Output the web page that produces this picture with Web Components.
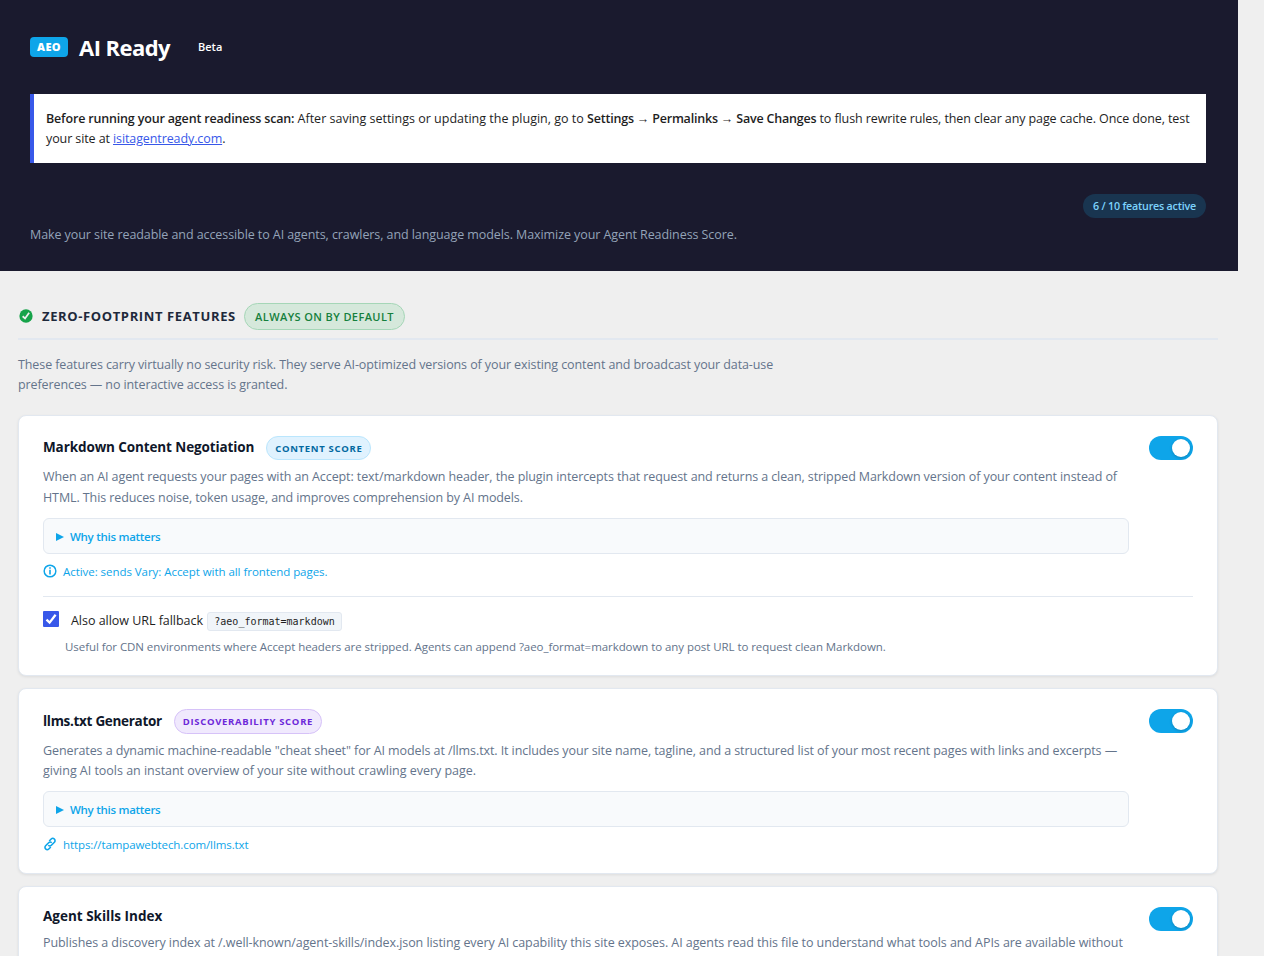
<!DOCTYPE html>
<html lang="en">
<head>
<meta charset="utf-8">
<title>AI Ready</title>
<style>
    body {
        margin: 0;
        background: #efefef;
        font-family: "Open Sans", "Noto Sans", sans-serif;
        font-size: 12.5px;
        color: #1e1e1e;
        height: 956px;
        overflow: hidden;
    }
</style>
</head>
<body>
<aeo-page></aeo-page>

<script>
class AeoBadge extends HTMLElement {
    connectedCallback() {
        this.attachShadow({ mode: 'open' }).innerHTML = `
            <style>
                :host {
                    display: inline-flex;
                    flex: none;
                    align-items: center;
                    justify-content: center;
                    box-sizing: border-box;
                    width: var(--w);
                    height: 24px;
                    border: 1px solid #bae6fd;
                    border-radius: 20px;
                    background: #e0f2fe;
                    color: #0369a1;
                    font-size: 9.5px;
                    font-weight: 700;
                    letter-spacing: var(--ls, .7px);
                    white-space: nowrap;
                }
                :host([kind="discover"]) {
                    height: 25px;
                    background: #f0e9fd;
                    border-color: #d6c2f8;
                    color: #6d28d9;
                }
                :host([kind="always"]) {
                    height: 27px;
                    background: #d5e8db;
                    border-color: #a5d6b7;
                    color: #15803d;
                    font-size: 11px;
                    font-weight: 600;
                }
                :host([kind="count"]) {
                    padding-bottom: 1px;
                    border: none;
                    background: #193550;
                    color: #7dd3fc;
                    font-size: 10.7px;
                    font-weight: 600;
                }
            </style>
            <slot></slot>
        `;
    }
}
customElements.define('aeo-badge', AeoBadge);

class AeoToggle extends HTMLElement {
    connectedCallback() {
        this.attachShadow({ mode: 'open' }).innerHTML = `
            <style>
                :host {
                    display: flex;
                    flex: none;
                    align-items: center;
                    justify-content: flex-end;
                    box-sizing: border-box;
                    width: 44px;
                    height: 24px;
                    padding: 3px;
                    border-radius: 12px;
                    background: #0ea5e9;
                }
                i {
                    width: 18px;
                    height: 18px;
                    border-radius: 50%;
                    background: #fff;
                    box-shadow: 0 1px 3px rgba(0, 0, 0, .2);
                }
            </style>
            <i></i>
        `;
    }
}
customElements.define('aeo-toggle', AeoToggle);

class AeoDetails extends HTMLElement {
    connectedCallback() {
        this.attachShadow({ mode: 'open' }).innerHTML = `
            <style>
                :host {
                    display: flex;
                    align-items: center;
                    box-sizing: border-box;
                    height: 36px;
                    padding: 0 12px 0 12px;
                    border: 1px solid #e2e8f0;
                    border-radius: 6px;
                    background: #f8fafc;
                    color: #0ea5e9;
                    font-size: 11.5px;
                    font-weight: 600;
                    letter-spacing: -.28px;
                }
                svg { margin: 1px 6px 0 0; }
            </style>
            <svg width="8" height="8" viewBox="0 0 8 8"><path d="M0 0l8 4-8 4z" fill="currentColor"/></svg>
            <slot></slot>
        `;
    }
}
customElements.define('aeo-details', AeoDetails);

const ICONS = {
    yes: '<circle cx="10" cy="10" r="8.3"/><path d="M5.800 10.300l3 2.700 5.100-7.200" fill="none" stroke="#efefef" stroke-width="2.200"/>',
    info: '<circle cx="10" cy="10" r="7.300" fill="none" stroke="currentColor" stroke-width="1.800"/><path d="M9 5.200h2v2H9zM9 8.500h2v6H9z"/>',
    link: '<g fill="none" stroke="currentColor" stroke-width="2"><path d="M9 6.300l2.500-2.500c1-1 2.900-1 4 0s1 3 0 4l-3.800 3.800c-1 1-2.800 1-3.900 0"/><path d="M11 13.700l-2.500 2.500c-1 1-2.900 1-4 0s-1-3 0-4l3.800-3.800c1-1 2.800-1 3.900 0"/></g>'
};

class AeoIcon extends HTMLElement {
    connectedCallback() {
        this.attachShadow({ mode: 'open' }).innerHTML = `
            <style>
                :host { display: inline-flex; flex: none; }
            </style>
            <svg width="16" height="16" viewBox="0 0 20 20" fill="currentColor">${ICONS[this.getAttribute('name')]}</svg>
        `;
    }
}
customElements.define('aeo-icon', AeoIcon);

class AeoCard extends HTMLElement {
    connectedCallback() {
        this.attachShadow({ mode: 'open' }).innerHTML = `
            <style>
                :host {
                    display: block;
                    box-sizing: border-box;
                    height: var(--h);
                    margin-bottom: 12px;
                    padding: 20px 24px 0;
                    border: 1px solid #e2e8f0;
                    border-radius: 8px;
                    background: #fff;
                    box-shadow: 0 1px 3px rgba(0, 0, 0, .08);
                }
                .row { display: flex; gap: 20px; }
                .body { flex: 1; }
                .head {
                    display: flex;
                    align-items: center;
                    height: var(--head, 24px);
                    gap: 12px;
                }
                h3 {
                    margin: 0 0 2px;
                    color: #0f172a;
                    font-size: 13.5px;
                    font-weight: 700;
                    letter-spacing: var(--title-ls);
                    white-space: nowrap;
                }
                .desc {
                    margin: var(--gap, 7px) 0 10px;
                    color: #64748b;
                    line-height: var(--lh, 20px);
                    white-space: nowrap;
                }
            </style>
            <div class="row">
                <div class="body">
                    <div class="head"><h3><slot name="title"></slot></h3><slot name="badge"></slot></div>
                    <div class="desc"><slot name="desc"></slot></div>
                    <slot name="more"></slot>
                </div>
                <aeo-toggle></aeo-toggle>
            </div>
            <slot></slot>
        `;
    }
}
customElements.define('aeo-card', AeoCard);

class AeoHeader extends HTMLElement {
    connectedCallback() {
        this.attachShadow({ mode: 'open' }).innerHTML = `
            <style>
                :host {
                    display: flex;
                    flex-direction: column;
                    box-sizing: border-box;
                    width: 1238px;
                    height: 271px;
                    padding: 34px 32px 0 30px;
                    background: #1a1a2e;
                    white-space: nowrap;
                }
                .brand { display: flex; align-items: center; height: 26px; }
                .logo {
                    width: 38px;
                    height: 20px;
                    border-radius: 4px;
                    background: #0ea5e9;
                    color: #fff;
                    font-size: 11px;
                    font-weight: 800;
                    line-height: 20px;
                    letter-spacing: .4px;
                    text-align: center;
                }
                h1 {
                    width: 119px;
                    margin: 0 0 0 11px;
                    color: #fff;
                    font-size: 22px;
                    line-height: 26px;
                    font-weight: 700;
                    letter-spacing: -.55px;
                }
                .beta { margin-bottom: 2px; color: #fff; font-size: 11px; font-weight: 600; }
                .notice {
                    box-sizing: border-box;
                    height: 69px;
                    margin-top: 34px;
                    padding: 15px 12px 0;
                    border-left: 4px solid #3858e9;
                    background: #fff;
                    line-height: 20px;
                }
                b { font-weight: 600; }
                a { color: #3858e9; }
                aeo-badge { align-self: flex-end; margin-top: 31px; }
                .sub { margin-top: 7px; color: #94a3b8; line-height: 20px; }
            </style>
            <div class="brand">
                <span class="logo">AEO</span>
                <h1>AI Ready</h1>
                <span class="beta">Beta</span>
            </div>
            <div class="notice">
                <span style="letter-spacing:-.1px"><b style="letter-spacing:-.17px">Before running your agent readiness scan:</b><span style="letter-spacing:0"> After saving settings or updating the plugin, go to </span><b style="letter-spacing:-.2px">Settings → Permalinks → Save Changes</b> to flush rewrite rules, then clear any page cache. Once done, test</span><br>
                <span style="letter-spacing:-.1px">your site at <a href="#">isitagentready.com</a>.</span>
            </div>
            <aeo-badge kind="count" style="--w:123px;--ls:-.2px">6 / 10 features active</aeo-badge>
            <div class="sub"><span style="letter-spacing:-.08px">Make your site readable and accessible to AI agents, crawlers, and language models. Maximize your Agent Readiness Score.</span></div>
        `;
    }
}
customElements.define('aeo-header', AeoHeader);

class AeoPage extends HTMLElement {
    connectedCallback() {
        this.attachShadow({ mode: 'open' }).innerHTML = `
            <style>
                :host { display: block; }
                main { width: 1200px; margin-left: 18px; }
                .section {
                    display: flex;
                    align-items: center;
                    box-sizing: border-box;
                    height: 69px;
                    padding-top: 22px;
                    border-bottom: 2px solid #e2e8f0;
                }
                .section aeo-icon { color: #16a34a; }
                .section aeo-badge { margin-top: 1px; }
                h2 {
                    width: 202px;
                    margin: 0 0 0 8px;
                    color: #1e293b;
                    font-size: 13px;
                    font-weight: 700;
                    white-space: nowrap;
                }
                .intro {
                    margin: 15px 0 20px;
                    color: #64748b;
                    line-height: 20px;
                    white-space: nowrap;
                }
                .hint {
                    display: flex;
                    align-items: center;
                    height: 18px;
                    margin: 8px 0 0 -1px;
                    gap: 5px;
                    color: #0ea5e9;
                    font-size: 11.5px;
                }
                .extra {
                    margin-top: 16px;
                    border-top: 1px solid #e2e8f0;
                }
                .check { display: flex; align-items: center; height: 20px; margin-top: 14px; }
                .check span { padding-bottom: 2px; }
                .box { width: 16px; height: 16px; margin: 0 12px 4px 0; border-radius: 1px; background: #3858e9; }
                code {
                    box-sizing: border-box;
                    width: 135px;
                    height: 19px;
                    margin: 0 0 0 4px;
                    border: 1px solid #e2e8f0;
                    border-radius: 3px;
                    background: #f1f5f9;
                    font: 10px/17px "DejaVu Sans Mono", monospace;
                    text-align: center;
                }
                .note { margin: 7px 0 0 22px; color: #64748b; font-size: 11.5px; line-height: 18px; white-space: nowrap; }
            </style>
            <aeo-header></aeo-header>
            <main>
                <div class="section">
                    <aeo-icon name="yes"></aeo-icon>
                    <h2><span style="letter-spacing:.62px">ZERO-FOOTPRINT FEATURES</span></h2>
                    <aeo-badge kind="always" style="--w:161px;--ls:.4px">ALWAYS ON BY DEFAULT</aeo-badge>
                </div>
                <div class="intro">
                    <span style="letter-spacing:-.1px">These features carry virtually no security risk. They serve AI-optimized versions of your existing content and broadcast your data-use</span><br>
                    <span style="letter-spacing:-.1px">preferences — no interactive access is granted.</span>
                </div>
                <aeo-card style="--h:261px;--lh:20.5px;--title-ls:-.11px">
                    <span slot="title">Markdown Content Negotiation</span>
                    <aeo-badge slot="badge" style="--w:105px">CONTENT SCORE</aeo-badge>
                    <div slot="desc">
                        <span style="letter-spacing:-.095px">When an AI agent requests your pages with an Accept: text/markdown header, the plugin intercepts that request and returns a clean, stripped Markdown version of your content instead of</span><br>
                        <span style="letter-spacing:-.1px">HTML. This reduces noise, token usage, and improves comprehension by AI models.</span>
                    </div>
                    <div slot="more">
                        <aeo-details>Why this matters</aeo-details>
                        <div class="hint"><aeo-icon name="info"></aeo-icon><span style="letter-spacing:-.05px">Active: sends Vary: Accept with all frontend pages.</span></div>
                    </div>
                    <div class="extra">
                        <div class="check">
                            <svg class="box" viewBox="0 0 16 16"><path d="M3.500 8.600l3.100 3 6-7.800" fill="none" stroke="#fff" stroke-width="2.300"/></svg>
                            <span style="letter-spacing:-.03px">Also allow URL fallback</span>
                            <code>?aeo_format=markdown</code>
                        </div>
                        <div class="note"><span style="letter-spacing:-.065px">Useful for CDN environments where Accept headers are stripped. Agents can append ?aeo_format=markdown to any post URL to request clean Markdown.</span></div>
                    </div>
                </aeo-card>
                <aeo-card style="--h:186px;--head:25px;--title-ls:-.3px">
                    <span slot="title">llms.txt Generator</span>
                    <aeo-badge slot="badge" kind="discover" style="--w:148px">DISCOVERABILITY SCORE</aeo-badge>
                    <div slot="desc">
                        <span style="letter-spacing:-.09px">Generates a dynamic machine-readable "cheat sheet" for AI models at /llms.txt. It includes your site name, tagline, and a structured list of your most recent pages with links and excerpts —</span><br>
                        <span style="letter-spacing:-.025px">giving AI tools an instant overview of your site without crawling every page.</span>
                    </div>
                    <div slot="more">
                        <aeo-details>Why this matters</aeo-details>
                        <div class="hint"><aeo-icon name="link"></aeo-icon><span style="letter-spacing:-.1px">https://tampawebtech.com/llms.txt</span></div>
                    </div>
                </aeo-card>
                <aeo-card style="--h:186px;--head:20px;--gap:6px">
                    <span slot="title">Agent Skills Index</span>
                    <div slot="desc">
                        <span style="letter-spacing:-.07px">Publishes a discovery index at /.well-known/agent-skills/index.json listing every AI capability this site exposes. AI agents read this file to understand what tools and APIs are available without</span>
                    </div>
                </aeo-card>
            </main>
        `;
    }
}
customElements.define('aeo-page', AeoPage);
</script>
</body>
</html>
